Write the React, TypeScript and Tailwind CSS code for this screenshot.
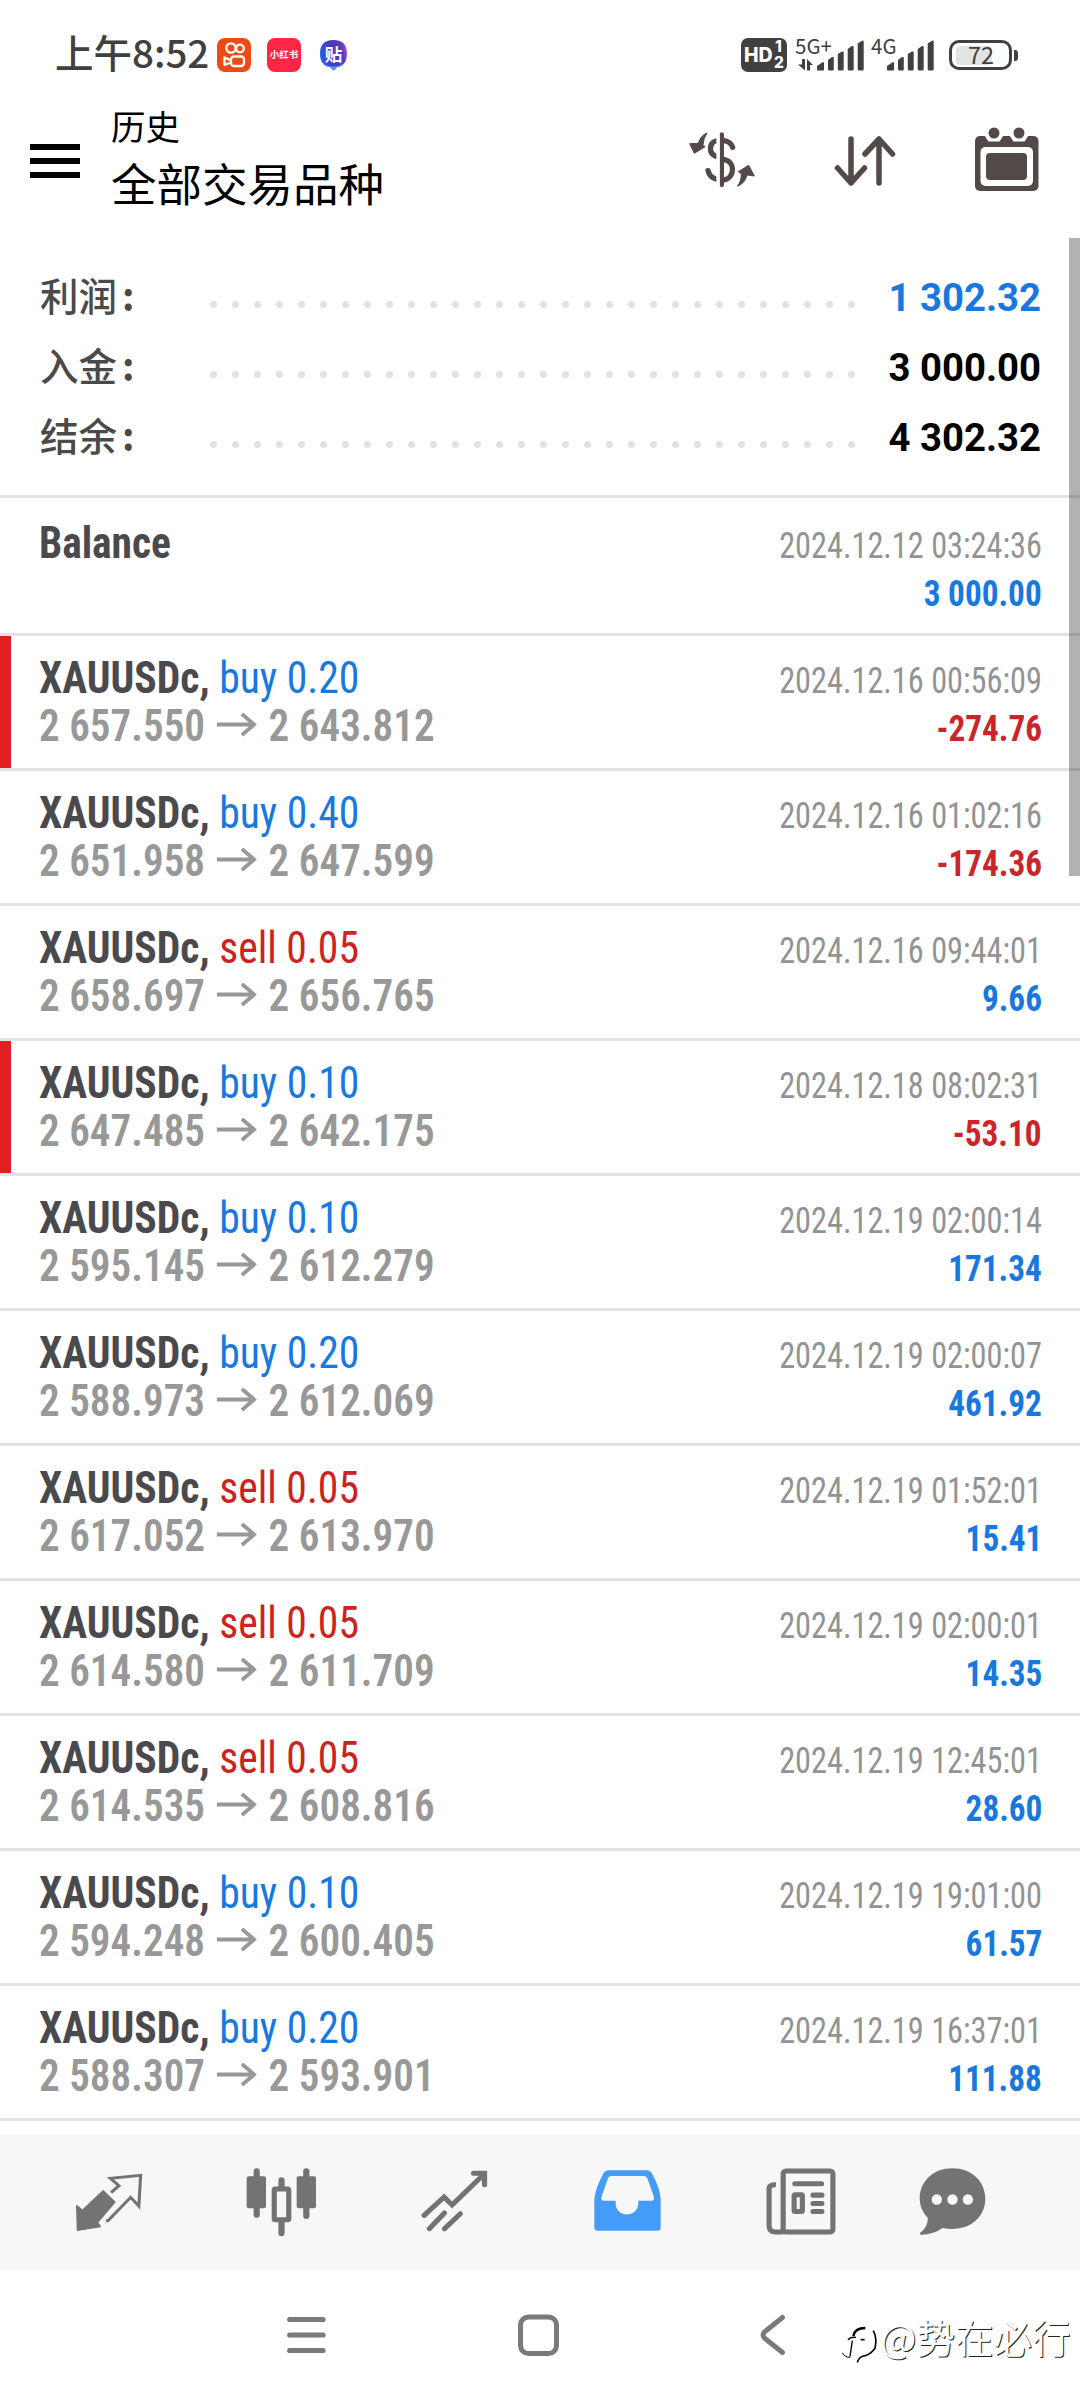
import React from "react";

type Trade = { kind: string; side: "buy" | "sell"; from: string; to: string; time: string; profit: string; flagged?: boolean };

const trades: Trade[] = [
  { kind: "buy 0.20", side: "buy", from: "2 657.550", to: "2 643.812", time: "2024.12.16 00:56:09", profit: "-274.76", flagged: true },
  { kind: "buy 0.40", side: "buy", from: "2 651.958", to: "2 647.599", time: "2024.12.16 01:02:16", profit: "-174.36" },
  { kind: "sell 0.05", side: "sell", from: "2 658.697", to: "2 656.765", time: "2024.12.16 09:44:01", profit: "9.66" },
  { kind: "buy 0.10", side: "buy", from: "2 647.485", to: "2 642.175", time: "2024.12.18 08:02:31", profit: "-53.10", flagged: true },
  { kind: "buy 0.10", side: "buy", from: "2 595.145", to: "2 612.279", time: "2024.12.19 02:00:14", profit: "171.34" },
  { kind: "buy 0.20", side: "buy", from: "2 588.973", to: "2 612.069", time: "2024.12.19 02:00:07", profit: "461.92" },
  { kind: "sell 0.05", side: "sell", from: "2 617.052", to: "2 613.970", time: "2024.12.19 01:52:01", profit: "15.41" },
  { kind: "sell 0.05", side: "sell", from: "2 614.580", to: "2 611.709", time: "2024.12.19 02:00:01", profit: "14.35" },
  { kind: "sell 0.05", side: "sell", from: "2 614.535", to: "2 608.816", time: "2024.12.19 12:45:01", profit: "28.60" },
  { kind: "buy 0.10", side: "buy", from: "2 594.248", to: "2 600.405", time: "2024.12.19 19:01:00", profit: "61.57" },
  { kind: "buy 0.20", side: "buy", from: "2 588.307", to: "2 593.901", time: "2024.12.19 16:37:01", profit: "111.88" },
];

const summary = [
  { label: "利润", value: "1 302.32", color: "text-[#1778e0]" },
  { label: "入金", value: "3 000.00", color: "text-black" },
  { label: "结余", value: "4 302.32", color: "text-black" },
];

function Bars() {
  return (
    <svg width="47" height="31" viewBox="0 0 47 31" fill="#404040">
      <path d="M0 30V26L6 22Q7 22 7 23V30Q7 30.500 6 30.500H1Q0 30.500 0 30Z" />
      <path d="M11 29V20L15 17Q16.800 16.500 16.800 18V29Q16.800 30.500 15.500 30.500H12.500Q11 30.500 11 29Z" />
      <path d="M20.800 29V14L25 11.500Q26.700 11 26.700 12.500V29Q26.700 30.500 25.300 30.500H22.300Q20.800 30.500 20.800 29Z" />
      <path d="M30.700 29V9L35 6Q36.700 5.500 36.700 7V29Q36.700 30.500 35.300 30.500H32.200Q30.700 30.500 30.700 29Z" />
      <path d="M40.700 29V3.500L45 .700Q46.700 .200 46.700 1.700V29Q46.700 30.500 45.300 30.500H42.200Q40.700 30.500 40.700 29Z" />
    </svg>
  );
}

function StatusBar() {
  return (
    <div className="flex h-[72px] items-end pl-[55px] text-[#404040] font-['Noto_Sans_CJK_SC',sans-serif]">
      <span className="w-[162px] whitespace-nowrap pb-[3px] text-[38.500px] font-medium leading-[36px]">上午8:52</span>
      <svg width="34" height="34" viewBox="0 0 34 34">
        <rect width="34" height="34" rx="8" fill="#f04a14" />
        <g fill="none" stroke="#fff" strokeWidth="2.300">
          <circle cx="14" cy="10" r="4.700" />
          <circle cx="23" cy="10.500" r="3.800" />
          <rect x="14" y="18.500" width="13" height="9.500" rx="3" />
          <path d="M14 22.500L7.500 19.500V27L14 24.500" strokeLinejoin="round" />
        </g>
      </svg>
      <div className="ml-[16px] flex h-[34px] w-[34px] items-center justify-center rounded-[8px] bg-[#ff2545]">
        <span className="whitespace-nowrap text-[9.500px] font-bold leading-none text-white">小红书</span>
      </div>
      <div className="relative ml-[18px] h-[34px] w-[29px]">
        <svg className="absolute" width="29" height="34" viewBox="0 0 29 34">
          <defs>
            <linearGradient id="tb" x1="0" x2="1" y1=".3" y2=".1">
              <stop offset="0" stopColor="#2a5be0" />
              <stop offset=".4" stopColor="#4a38b4" />
              <stop offset=".8" stopColor="#5a3cc0" />
              <stop offset="1" stopColor="#c45ac8" />
            </linearGradient>
          </defs>
          <path d="M14.500 2C24 2 28 7 28 15.500C28 24 24 28.500 18 29L14.500 32.500L11 29C5 28.500 1 24 1 15.500C1 7 5 2 14.500 2Z" fill="url(#tb)" />
          <path d="M3 23Q7 28.500 14.500 28.500Q21 28.500 25 24Q22 28.700 18 29L14.500 32.500L11 29Q5.500 28 3 23Z" fill="#3fa0ff" />
        </svg>
        <span className="relative block text-center text-[17.500px] font-bold leading-[31px] text-white">贴</span>
      </div>
      <div className="ml-[393px] flex h-[34px] w-[46px] rounded-[7px] bg-[#404040] pl-[3px] text-white font-['Inter',sans-serif]">
        <span className="w-[30px] text-[19.500px] font-extrabold leading-[35px]">HD</span>
        <span className="flex flex-col pt-[1px] text-[15.500px] font-extrabold leading-[16px]">
          <span className="pl-[1px]">1</span>
          <span>2</span>
        </span>
      </div>
      <div className="relative ml-[8px] h-[34px] w-[70px]">
        <span className="absolute left-0 top-0 text-[20.500px] leading-[15px]">5G+</span>
        <svg className="absolute left-[3px] top-[21px]" width="15" height="12" viewBox="0 0 15 12" fill="#404040">
          <path d="M4 0H7V11.500L0 5.500H4ZM9 11.500V0L15 6H12V11.500Z" />
        </svg>
        <div className="absolute left-[22px] top-[2px]"><Bars /></div>
      </div>
      <div className="relative ml-[6px] h-[34px] w-[64px]">
        <span className="absolute left-0 top-0 text-[20.500px] leading-[15px]">4G</span>
        <div className="absolute left-[16px] top-[2px]"><Bars /></div>
      </div>
      <div className="mb-[2px] ml-[14px] flex items-center">
        <div className="flex h-[30px] w-[63px] items-center rounded-[10px] border-[3px] border-[#404040] pl-[4px]">
          <div className="flex h-[19px] w-[36px] items-center rounded-[4px] bg-[#e3e3e3] pl-[12px]">
            <span className="text-[23.500px] leading-none">72</span>
          </div>
        </div>
        <div className="ml-[2px] h-[11px] w-[3.500px] rounded-r-[3px] bg-[#404040]" />
      </div>
    </div>
  );
}

function Header() {
  return (
    <div className="flex h-[166px] items-start pl-[30px]">
      <div className="flex w-[50px] flex-col gap-[8px] pt-[72px]">
        <div className="h-[6px] bg-black" />
        <div className="h-[6px] bg-black" />
        <div className="h-[6px] bg-black" />
      </div>
      <div className="ml-[31px] w-[577px] pt-[31px] text-black font-['Noto_Sans_CJK_SC',sans-serif]">
        <div className="text-[34.500px] leading-[44px]">历史</div>
        <div className="pt-[6px] text-[45.500px] leading-[58px]">全部交易品种</div>
      </div>
      <svg className="mt-[58px]" width="69" height="60" viewBox="24 34 207 180">
        <g fill="none" stroke="#544949" strokeWidth="16" strokeLinecap="round">
          <path d="M125.500 47V199" strokeWidth="13" />
          <path d="M132 66Q152 69 158 86M108 67C88 72 84 103 108 113M132 123C166 128 166 176 132 184M84 156Q89 176 108 181" />
        </g>
        <path d="M114 40V210" stroke="#fff" strokeWidth="10" />
        <g fill="#544949" stroke="#544949" strokeWidth="3" strokeLinejoin="round">
          <path d="M81 43Q62 50 55 74L29 75L43 104L75 84L69 78Q70 60 81 43Z" />
          <path d="M172 202Q184 190 184 165L175 159L206 140L223 172L201 169Q194 196 172 202Z" />
        </g>
      </svg>
      <svg className="ml-[77px] mt-[63px]" width="62" height="52" viewBox="834 135 62 52" fill="none" stroke="#544949" strokeWidth="5.500" strokeLinecap="round" strokeLinejoin="round">
        <path d="M851 139V183M837.500 168L851 183L864.500 168M879 183V139M865 154L879 139L892.500 154" />
      </svg>
      <svg className="ml-[79px] mt-[55px]" width="64" height="65" viewBox="975 127 64 65" fill="#544949">
        <rect x="975" y="136" width="63.500" height="55" rx="5" />
        <path d="M986 136V134H1002V136L999 140.500H989ZM1011 136V134H1027V136L1024 140.500H1014Z" fill="#fff" stroke="#fff" strokeWidth="2" />
        <circle cx="994" cy="133" r="5.500" />
        <circle cx="1019" cy="133" r="5.500" />
        <rect x="980.500" y="147" width="52.500" height="39" rx="5" fill="#fff" />
        <rect x="986" y="153" width="41" height="27" rx="4" />
      </svg>
    </div>
  );
}

function Summary() {
  return (
    <div className="flex h-[257px] flex-col pt-[23px]">
      {summary.map((s) => (
        <div key={s.label} className="flex h-[70px] items-center pl-[40px] pr-[39px]">
          <span className="w-[170px] pb-[3px] text-[38.500px] font-medium leading-[67px] text-[#4a4a4a] font-['Noto_Sans_CJK_SC',sans-serif]">
            {s.label}
            <span className="ml-[5px] font-bold">:</span>
          </span>
          <div className="flex gap-[15px] pt-[16px]">
            {Array.from({ length: 30 }, (_, i) => (
              <div key={i} className="h-[7px] w-[7px] rounded-full bg-[#e2e2e2]" />
            ))}
          </div>
          <span className={`ml-auto pt-[3px] text-[38.300px] font-bold leading-[67px] font-['Roboto',sans-serif] ${s.color}`}>{s.value}</span>
        </div>
      ))}
    </div>
  );
}

function Arrow() {
  return (
    <svg className="ml-[12px] mr-[13px] inline-block align-baseline" width="43" height="28" viewBox="0 0 43 28" preserveAspectRatio="none" fill="none" stroke="#989898" strokeWidth="4">
      <path d="M0 11.500H40M27 1L40 11.500L27 22" />
    </svg>
  );
}

function Stamp({ time, profit }: { time: string; profit: string }) {
  return (
    <div className="flex flex-col items-end text-[36.500px]">
      <span className="origin-right scale-x-[0.885] whitespace-nowrap text-[#939393]">{time}</span>
      <span className={profit.startsWith("-") ? "origin-right scale-x-[0.910] font-bold text-[#c9252b]" : "origin-right scale-x-[0.910] font-bold text-[#1778e0]"}>{profit}</span>
    </div>
  );
}

function Row({ t }: { t: Trade }) {
  return (
    <div className="flex h-[135px] border-b-[3px] border-[#e3e3e3]">
      <div className={t.flagged ? "w-[11px] bg-[#e02020]" : "w-[11px]"} />
      <div className="flex flex-1 items-baseline justify-between pl-[28px] pr-[38px] pt-[18px] leading-[48px] font-['Roboto_Condensed',sans-serif]">
        <div className="text-[44px]">
          <div className="origin-left scale-x-[0.946] whitespace-nowrap">
            <span className="font-bold text-[#4a4a4e]">XAUUSDc,</span>{" "}
            <span className={t.side === "buy" ? "text-[#1778e0]" : "text-[#cc2222]"}>{t.kind}</span>
          </div>
          <div className="flex origin-left scale-x-[0.935] items-baseline font-semibold text-[#989898]">
            <span>{t.from}</span>
            <Arrow />
            <span>{t.to}</span>
          </div>
        </div>
        <Stamp time={t.time} profit={t.profit} />
      </div>
    </div>
  );
}

function TabBar() {
  const g = "#737373";
  return (
    <div className="flex h-[135px] items-start bg-[#f7f7f7] pl-[22px]">
      <div className="flex w-[173px] justify-center pt-[35px]">
        <svg width="68" height="63" viewBox="216 210 198 189" preserveAspectRatio="none">
          <path d="M298 272L332 306L282 367L290 380L223 391L221 317L238 331Z" fill={g} stroke={g} strokeWidth="4" strokeLinejoin="round" />
          <path d="M321 278L344 257L319 235L407 226L402 318L378 292L312 362H306" fill="none" stroke={g} strokeWidth="9" strokeLinejoin="miter" />
        </svg>
      </div>
      <div className="flex w-[173px] justify-center pt-[33px]">
        <svg width="71" height="69" viewBox="713 203 206 207" preserveAspectRatio="none">
          <g stroke={g} strokeWidth="18" strokeLinecap="round"><path d="M744 213V343M888 213V347M816 240V265M816 365V399" /></g>
          <rect x="715" y="228" width="56" height="96" rx="6" fill={g} />
          <rect x="860" y="228" width="56" height="96" rx="6" fill={g} />
          <rect x="795" y="266" width="42" height="92" rx="3" fill="#f7f7f7" stroke={g} strokeWidth="15" />
        </svg>
      </div>
      <div className="flex w-[173px] justify-center pt-[35px]">
        <svg width="67" height="63" viewBox="1222 210 194 189" preserveAspectRatio="none" fill="none" stroke={g} strokeWidth="15" strokeLinecap="round">
          <path d="M1231 346L1289 291L1312 315L1405 222M1374 220H1406V254" />
          <path d="M1290 339L1246 386M1336 341L1290 386" />
        </svg>
      </div>
      <div className="flex w-[173px] justify-center pt-[35px]">
        <svg width="67" height="61" viewBox="157 210 195 184" preserveAspectRatio="none">
          <path d="M198 211H312Q320 211 325 219Q350 265 351 300V384Q351 393 341 393H168Q158 393 158 384V300Q160 265 185 219Q190 211 198 211Z" fill="#449cf8" />
          <path d="M208 228H302Q309 228 312 234L331 290Q334 303 324 303H286V312C284 354 222 356 220 312V303H186Q176 303 179 290L198 234Q201 228 208 228Z" fill="#f7f7f7" />
        </svg>
      </div>
      <div className="flex w-[173px] justify-center pt-[33px]">
        <svg width="70" height="67" viewBox="656 203 204 200" preserveAspectRatio="none" fill="none" stroke={g} strokeWidth="15">
          <rect x="706" y="212" width="145" height="182" rx="8" />
          <path d="M685 253Q665 252 665 266V375Q665 394 682 394H706" />
          <path d="M740 250H818M793 284H819M793 309H819M793 333H819" strokeLinecap="round" />
          <rect x="738" y="283" width="24" height="50" rx="3" />
        </svg>
      </div>
      <div className="flex w-[131px] justify-center pt-[33px]">
        <svg width="67" height="67" viewBox="1101 203 196 200" preserveAspectRatio="none">
          <path d="M1198 204C1255 204 1295 243 1295 295C1295 347 1255 385 1198 385Q1183 385 1170 382Q1145 401 1106 402Q1102 401 1104 397Q1127 380 1127 352Q1103 328 1103 295C1103 243 1143 204 1198 204Z" fill={g} />
          <g fill="#f7f7f7"><ellipse cx="1153" cy="297" rx="15" ry="16" /><ellipse cx="1199" cy="297" rx="15" ry="16" /><ellipse cx="1244" cy="297" rx="15" ry="16" /></g>
        </svg>
      </div>
    </div>
  );
}

function SystemNav() {
  return (
    <div className="relative flex h-[130px] items-start bg-white pl-[287px] pt-[44px]">
      <svg width="39" height="42" viewBox="0 0 39 42" stroke="#7a7a7a" strokeWidth="5.200" strokeLinecap="round"><path d="M2.700 5.500H36M2.700 21H36M2.700 36.500H36" /></svg>
      <svg className="ml-[192px]" width="41" height="42" viewBox="0 0 41 42" fill="none" stroke="#7a7a7a" strokeWidth="5"><rect x="2.500" y="3" width="36" height="36.500" rx="8" /></svg>
      <svg className="ml-[201px]" width="26" height="42" viewBox="0 0 26 42" fill="none" stroke="#7a7a7a" strokeWidth="5" strokeLinecap="round" strokeLinejoin="round"><path d="M22.500 3.500L5 17.500Q1 21 5 24.500L22.500 38.500" /></svg>
      <div className="absolute left-[842px] top-[46px] flex">
        <svg width="38" height="48" viewBox="36 48 114 144" fill="none" stroke="#000">
          <path d="M70 108Q74 84 106 84" strokeWidth="7" />
          <path d="M54 120Q60 110 78 112M67 122L60 170" strokeWidth="4" />
          <path d="M92 119H104" strokeWidth="5" />
          <path d="M130 92Q142 115 135 145Q120 166 100 168Q86 172 82 188" strokeWidth="5" />
          <path d="M37 158Q44 172 60 172" strokeWidth="3" />
        </svg>
        <span className="whitespace-nowrap text-[38.500px] leading-[40px] text-white font-['Noto_Sans_CJK_SC',sans-serif] [text-shadow:1px_1px_0_#222]">@势在必行</span>
      </div>
    </div>
  );
}

export default function App() {
  return (
    <div className="relative h-[2400px] w-[1080px] overflow-hidden bg-white">
      <StatusBar />
      <Header />
      <Summary />
      <div className="h-[3px] bg-[#e3e3e3]" />
      <div className="flex h-[138px] items-baseline justify-between border-b-[3px] border-[#e3e3e3] pl-[39px] pr-[38px] pt-[21px] leading-[48px] font-['Roboto_Condensed',sans-serif]">
        <div className="origin-left scale-x-[0.940] text-[44px] font-bold text-[#4a4a4e]">Balance</div>
        <Stamp time="2024.12.12 03:24:36" profit="3 000.00" />
      </div>
      {trades.map((t) => (
        <Row key={t.time} t={t} />
      ))}
      <div className="h-[14px]" />
      <TabBar />
      <SystemNav />
      <div className="absolute right-0 top-[238px] h-[638px] w-[11px] bg-black/30" />
    </div>
  );
}
